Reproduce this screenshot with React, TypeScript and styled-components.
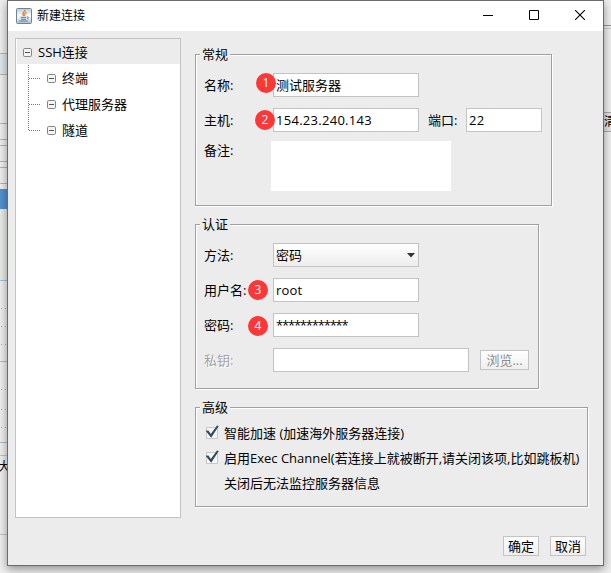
import React from "react";
import styled, { createGlobalStyle } from "styled-components";

const Global = createGlobalStyle`
  * { box-sizing: border-box; }
  body { margin: 0; overflow: hidden; background: #e9e9e9; }
  button, input, textarea { font: inherit; }
`;

const Desktop = styled.main`
  display: grid;
  grid-template: 573px / 611px;
  width: 611px;
  height: 573px;
  overflow: hidden;
  color: #000;
  font: 13px/20px "Open Sans", "Noto Sans CJK SC", sans-serif;
  > * { grid-area: 1 / 1; }
`;

const Behind = styled.div`
  display: grid;
  grid-template: 573px / 7px 1fr 7px;
  background: #f0f0f0;
`;

const Strip = styled.div`
  display: flex;
  flex-direction: column;
  overflow: hidden;
`;

const Segment = styled.div<{ $h: number; $bg?: string; $line?: string; $dots?: boolean }>`
  flex: none;
  height: ${(p) => p.$h}px;
  background: ${(p) =>
    p.$dots
      ? "repeating-linear-gradient(90deg, #f0f0f0 0 1px, #aaa 1px 2px, #f0f0f0 2px 4px) bottom / 100% 1px no-repeat #f0f0f0"
      : p.$bg ?? "#f0f0f0"};
  border-bottom: ${(p) => (p.$line ? `1px solid ${p.$line}` : "0")};
  white-space: nowrap;
  overflow: hidden;
  font-size: 12px;
`;

const Clipped = styled.span<{ $shift: number; $line: number }>`
  display: block;
  margin-left: ${(p) => p.$shift}px;
  line-height: ${(p) => p.$line}px;
`;

const Window = styled.section`
  display: flex;
  flex-direction: column;
  width: 597px;
  height: 566px;
  margin-left: 7px;
  background: #ececec;
  border: 1px solid #6b6b6b;
  box-shadow: 0 3px 9px rgba(0, 0, 0, 0.42);
  z-index: 1;
`;

const TitleBar = styled.header`
  display: flex;
  align-items: center;
  flex: none;
  height: 30px;
  padding-left: 8px;
  background: #fff;
  font-size: 12px;
`;

const Title = styled.h1`
  flex: 1;
  margin: 0 0 0 5px;
  font: inherit;
`;

const WindowButton = styled.button`
  display: grid;
  place-items: center;
  width: 46px;
  height: 30px;
  padding: 0 0 2px;
  border: 0;
  background: none;
`;

const WindowButtons = styled.div`
  display: flex;
`;

const Body = styled.div`
  display: flex;
  gap: 14px;
  padding: 7px 0 0 7px;
`;

const Tree = styled.nav`
  flex: none;
  width: 166px;
  height: 480px;
  padding-left: 1px;
  background: #fff;
  border: 1px solid #c3c3c3;
`;

const TreeRow = styled.div<{ $selected?: boolean; $child?: boolean }>`
  display: flex;
  align-items: center;
  gap: 6px;
  height: 26px;
  padding-left: ${(p) => (p.$child ? 0 : 6)}px;
  background: ${(p) => (p.$selected ? "linear-gradient(#ececec, #ececec) 0 0 / 100% 25px no-repeat" : "none")};
`;

const Branch = styled.svg`
  flex: none;
  width: 24px;
  height: 26px;
`;

const Main = styled.div`
  display: flex;
  flex-direction: column;
  width: 394px;
  padding-top: 16px;
`;

const Group = styled.section<{ $w: number; $h: number; $gap: number }>`
  width: ${(p) => p.$w}px;
  height: ${(p) => p.$h}px;
  margin-bottom: ${(p) => p.$gap}px;
  padding: 0 0 0 8px;
  border: 1px solid #a0a0a0;
  box-shadow: 1px 1px #fff, inset 1px 1px #fff;
`;

const Legend = styled.h2<{ $gap?: number }>`
  width: 30px;
  height: 20px;
  margin: -11px 0 ${(p) => p.$gap ?? 9}px -4px;
  padding-left: 2px;
  background: #ececec;
  font: inherit;
`;

const Field = styled.div<{ $tall?: boolean }>`
  position: relative;
  display: flex;
  align-items: ${(p) => (p.$tall ? "flex-start" : "center")};
  height: ${(p) => (p.$tall ? 50 : 24)}px;
  margin-top: ${(p) => (p.$tall ? -2 : 0)}px;
  margin-bottom: ${(p) => (p.$tall ? 0 : 11)}px;
`;

const Label = styled.label<{ $disabled?: boolean; $raised?: boolean }>`
  flex: none;
  width: 69px;
  margin-top: ${(p) => (p.$raised ? -1 : 0)}px;
  white-space: nowrap;
  color: ${(p) => (p.$disabled ? "#a3a3a3" : "#000")};
  text-shadow: ${(p) => (p.$disabled ? "1px 1px #fff" : "none")};
`;

const PortLabel = styled(Label)`
  width: 38px;
  margin-left: 9px;
`;

const Input = styled.input<{ $w: number; $track?: number; $lift?: number }>`
  width: ${(p) => p.$w}px;
  height: 24px;
  padding: 0 2px ${(p) => p.$lift ?? 0}px;
  border: 1px solid #c3c3c3;
  border-radius: 0;
  background: #fff;
  color: #000;
  letter-spacing: ${(p) => p.$track ?? 0}px;
`;

const Remark = styled.textarea`
  width: 180px;
  height: 50px;
  margin-left: -2px;
  border: 0;
  background: #fff;
  resize: none;
`;

const Select = styled.div`
  display: flex;
  align-items: center;
  justify-content: space-between;
  width: 146px;
  height: 24px;
  padding: 0 3px 0 2px;
  border: 1px solid #c3c3c3;
  background: linear-gradient(#fff, #ededed);
`;

const Button = styled.button<{ $w: number; $disabled?: boolean }>`
  flex: none;
  width: ${(p) => p.$w}px;
  height: 20px;
  padding: 0;
  border: 1px solid #c3c3c3;
  background: linear-gradient(#fff, #efefef);
  color: ${(p) => (p.$disabled ? "#8c8c8c" : "#000")};
  line-height: 17px;
  white-space: nowrap;
`;

const BrowseButton = styled(Button)`
  margin-left: 11px;
`;

const Badge = styled.span<{ $x: number; $y: number }>`
  position: absolute;
  left: ${(p) => p.$x}px;
  top: ${(p) => p.$y}px;
  width: 20px;
  height: 20px;
  border-radius: 50%;
  background: #fb3838;
  color: #fff;
  text-align: center;
  font-size: 12px;
  line-height: 20px;
`;

const Option = styled.label`
  display: flex;
  align-items: center;
  gap: 4px;
  height: 25px;
  padding-left: 1px;
  white-space: nowrap;
`;

const OptionText = styled.span<{ $indent?: boolean }>`
  margin-left: ${(p) => (p.$indent ? 19 : 0)}px;
`;

const Footer = styled.footer`
  display: flex;
  justify-content: flex-end;
  gap: 11px;
  padding: 18px 17px 0 0;
`;

const JavaIcon = () => (
  <svg width="16" height="16" viewBox="0 0 16 16" fill="none">
    <defs>
      <linearGradient id="tile" x2="0" y2="1">
        <stop stopColor="#b9cbd9" />
        <stop offset=".5" stopColor="#fff" />
        <stop offset="1" stopColor="#a9bdcc" />
      </linearGradient>
    </defs>
    <rect x=".5" y=".5" width="15" height="15" rx="1" fill="url(#tile)" stroke="#6c8498" />
    <path d="M8.8 1.8C9.6 3.8 5 4.6 7.6 8M10.6 4.3C7.8 5.2 9.8 6.2 8.4 8" stroke="#e9822b" strokeWidth="1.4" />
    <path d="M4.5 9.3h6M5 11.2h5M3.2 13h8.5M11 9c2.4-.3 1.9 1.5 0 2" stroke="#557f9f" />
  </svg>
);

const Collapse = () => (
  <svg width="9" height="9" viewBox="0 0 9 9" fill="none" stroke="#858585">
    <rect x=".5" y=".5" width="8" height="8" rx="1.2" fill="#f4f4f4" />
    <path d="M2 4.5h5" stroke="#555" />
  </svg>
);

const Check = () => (
  <svg width="15" height="15" viewBox="0 0 15 15" fill="none">
    <rect x="1.5" y="2.5" width="11" height="11" fill="#f6f6f6" stroke="#c8c8c8" />
    <path d="M.6 5.8 3.4 5.4 5.8 9 12 .6 13.8 1 6.2 12.8z" fill="#2c4a63" />
  </svg>
);

const children = ["终端", "代理服务器", "隧道"];

const leftStrip = [
  { h: 54, line: "#b5b5b5" },
  { h: 21, bg: "#e0e8ed", line: "#b5b5b5" },
  { h: 49, line: "#b5b5b5" },
  { h: 16, line: "#b5b5b5" },
  { h: 6, line: "#b5b5b5" },
  { h: 16, line: "#b5b5b5" },
  { h: 6, line: "#b5b5b5" },
  { h: 16, line: "#b5b5b5" },
  { h: 5 },
  { h: 20, bg: "#5292cf" },
  { h: 72, bg: "#e9ece8", line: "#a9c4d6" },
  { h: 28, dots: true },
  { h: 18, dots: true },
  { h: 18, dots: true },
  { h: 17, line: "#a9bccb" },
  { h: 28, dots: true },
  { h: 20, dots: true },
  { h: 18, dots: true },
  { h: 15, line: "#a9bccb" },
  { h: 13, line: "#c5c5c5" },
  { h: 79, line: "#c5c5c5", text: "大" },
  { h: 38 },
];

export default function App() {
  return (
    <>
      <Global />
      <Desktop>
        <Behind>
          <Strip>
            {leftStrip.map((s, i) => (
              <Segment key={i} $h={s.h} $bg={s.bg} $line={s.line} $dots={s.dots}>
                {s.text && <Clipped $shift={-2} $line={22}>{s.text}</Clipped>}
              </Segment>
            ))}
          </Strip>
          <Strip />
          <Strip>
            <Segment $h={26} $line="#999" />
            <Segment $h={3} $line="#ccc" />
            <Segment $h={84} $line="#aaa" />
            <Segment $h={19} $bg="#e6e6e6" $line="#aaa">
              <Clipped $shift={0} $line={18}>清</Clipped>
            </Segment>
          </Strip>
        </Behind>
        <Window>
          <TitleBar>
            <JavaIcon />
            <Title>新建连接</Title>
            <WindowButtons>
              <WindowButton aria-label="最小化">
                <svg width="10" height="10"><path d="M0 5.5h10" stroke="#000" /></svg>
              </WindowButton>
              <WindowButton aria-label="最大化">
                <svg width="10" height="10"><path d="M.5.5h9v9h-9z" fill="none" stroke="#000" /></svg>
              </WindowButton>
              <WindowButton aria-label="关闭">
                <svg width="10" height="10"><path d="M0 0l10 10M10 0L0 10" stroke="#000" strokeWidth="1.1" /></svg>
              </WindowButton>
            </WindowButtons>
          </TitleBar>
          <Body>
            <Tree>
              <TreeRow $selected><Collapse />SSH连接</TreeRow>
              {children.map((name, i) => (
                <TreeRow key={name} $child>
                  <Branch fill="none" stroke="#777" strokeDasharray="1 1">
                    <path d={i === children.length - 1 ? "M11.5 0v13" : "M11.5 0v26"} />
                    <path d="M12 13.5h12" />
                  </Branch>
                  <Collapse />
                  {name}
                </TreeRow>
              ))}
            </Tree>
            <Main>
              <Group $w={357} $h={152} $gap={18}>
                <Legend>常规</Legend>
                <Field>
                  <Label>名称:</Label>
                  <Input $w={146} $lift={2} defaultValue="测试服务器" />
                  <Badge $x={52} $y={0}>1</Badge>
                </Field>
                <Field>
                  <Label $raised>主机:</Label>
                  <Input $w={146} $track={0.28} defaultValue="154.23.240.143" />
                  <PortLabel $raised>端口:</PortLabel>
                  <Input $w={76} $track={0.4} defaultValue="22" />
                  <Badge $x={51} $y={2}>2</Badge>
                </Field>
                <Field $tall>
                  <Label $raised>备注:</Label>
                  <Remark />
                </Field>
              </Group>
              <Group $w={344} $h={165} $gap={18}>
                <Legend>认证</Legend>
                <Field>
                  <Label>方法:</Label>
                  <Select>
                    密码
                    <svg width="8" height="5"><path d="M0 0h8L4 4.5z" fill="#333" /></svg>
                  </Select>
                </Field>
                <Field>
                  <Label $raised>用户名:</Label>
                  <Input $w={146} $track={0.2} defaultValue="root" />
                  <Badge $x={44} $y={2}>3</Badge>
                </Field>
                <Field>
                  <Label>密码:</Label>
                  <Input $w={146} $track={-1.2} defaultValue="************" />
                  <Badge $x={44} $y={3}>4</Badge>
                </Field>
                <Field>
                  <Label $disabled>私钥:</Label>
                  <Input $w={196} />
                  <BrowseButton $w={49} $disabled>浏览...</BrowseButton>
                </Field>
              </Group>
              <Group $w={393} $h={100} $gap={0}>
                <Legend $gap={3}>高级</Legend>
                <Option><Check /><OptionText>智能加速 (加速海外服务器连接)</OptionText></Option>
                <Option><Check /><OptionText>启用Exec Channel(若连接上就被断开,请关闭该项,比如跳板机)</OptionText></Option>
                <Option><OptionText $indent>关闭后无法监控服务器信息</OptionText></Option>
              </Group>
            </Main>
          </Body>
          <Footer>
            <Button $w={36}>确定</Button>
            <Button $w={36}>取消</Button>
          </Footer>
        </Window>
      </Desktop>
    </>
  );
}
